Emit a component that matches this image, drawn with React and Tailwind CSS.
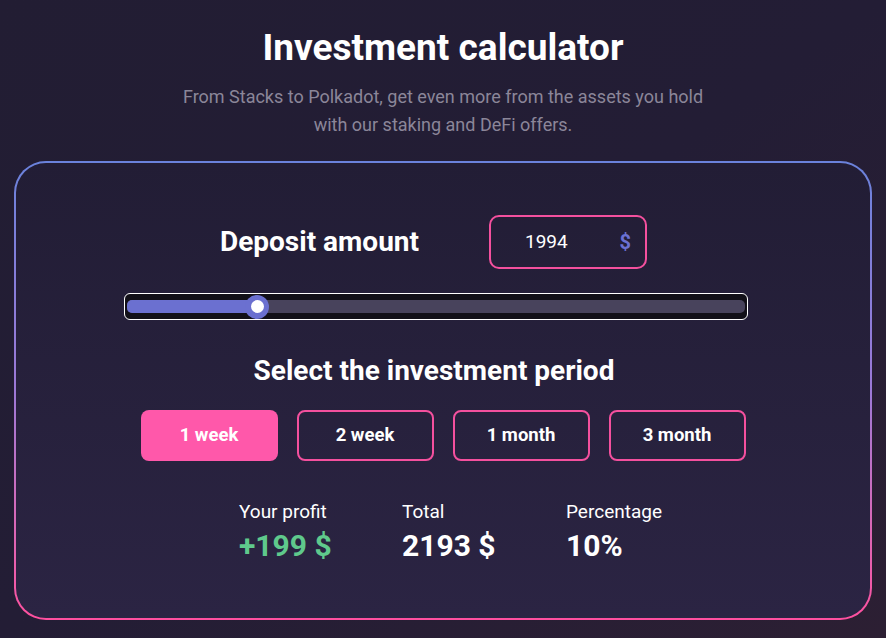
export default function App() {
  const periods = ["1 week", "2 week", "1 month", "3 month"];
  return (
    <div
      className="w-[886px] h-[638px] overflow-hidden bg-gradient-to-br from-[#221d33] via-[#231d35] to-[#2c1f33] text-white"
      style={{ fontFamily: "Roboto, 'Liberation Sans', sans-serif" }}
    >
      <div className="pt-[28px] flex flex-col items-center">
        <h1 className="text-[37px] leading-[40px] font-bold">Investment calculator</h1>
        <p className="mt-[15px] text-[18px] leading-[28px] text-[#8b8699] text-center w-[540px]">
          From Stacks to Polkadot, get even more from the assets you hold with our staking and DeFi offers.
        </p>
      </div>
      <div className="mx-[14px] mt-[22px] h-[459px] rounded-[32px] p-[2px] bg-gradient-to-b from-[#6a82dc] via-[#9c78d6] to-[#ff4f9f]">
        <div className="h-full rounded-[30px] bg-gradient-to-b from-[#221d35] to-[#2b2443] flex flex-col items-center">
          <div className="mt-[52px] flex items-center gap-[70px] pr-[19px]">
            <span className="text-[28px] leading-[34px] font-bold">Deposit amount</span>
            <div className="w-[158px] h-[54px] rounded-[10px] border-2 border-[#f4509e] flex items-center pl-[34px] pr-[14px]">
              <span className="text-[19px] flex-1">1994</span>
              <span className="text-[20px] font-bold text-[#6b71d3]">$</span>
            </div>
          </div>
          <div className="mt-[24px] mr-[14px] w-[624px] h-[27px] rounded-[6px] border border-white bg-[#121018] flex items-center px-[2px]">
            <div className="relative w-full h-[13px] rounded-[5px] bg-[#48435c]">
              <div className="h-full w-[130px] rounded-l-[5px] bg-[#6b70d0]" />
              <div className="absolute left-[118px] top-1/2 -translate-y-1/2 w-[24px] h-[24px] rounded-full bg-[#6b70d0] flex items-center justify-center">
                <div className="w-[13px] h-[13px] rounded-full bg-white" />
              </div>
            </div>
          </div>
          <h2 className="mt-[34px] mr-[18px] text-[28px] leading-[34px] font-bold">Select the investment period</h2>
          <div className="mt-[22px] flex gap-[19px]">
            {periods.map((p, i) => (
              <button
                key={p}
                className={
                  i === 0
                    ? "w-[137px] h-[51px] rounded-[8px] bg-[#ff58aa] text-[18.5px] font-bold"
                    : "w-[137px] h-[51px] rounded-[8px] border-2 border-[#f4509e] text-[18.5px] font-bold"
                }
              >
                {p}
              </button>
            ))}
          </div>
          <div className="mt-[39px] flex pl-[15px]">
            <div className="w-[163px]">
              <div className="text-[19px] leading-[24px]">Your profit</div>
              <div className="mt-[4px] text-[30px] leading-[36px] font-bold text-[#5fc98c]">+199 $</div>
            </div>
            <div className="w-[164px]">
              <div className="text-[19px] leading-[24px]">Total</div>
              <div className="mt-[4px] text-[30px] leading-[36px] font-bold">2193 $</div>
            </div>
            <div className="w-[96px]">
              <div className="text-[19px] leading-[24px]">Percentage</div>
              <div className="mt-[4px] text-[30px] leading-[36px] font-bold">10%</div>
            </div>
          </div>
        </div>
      </div>
    </div>
  );
}
